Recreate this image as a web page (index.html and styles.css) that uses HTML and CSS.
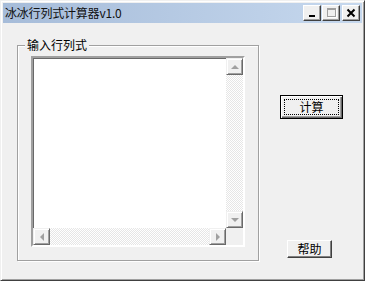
FILE: index.html
```
<!DOCTYPE html>
<html lang="zh-CN">
<head>
<meta charset="utf-8">
<link rel="stylesheet" href="styles.css">
</head>
<body>
<div class="window">
  <div class="titlebar">
    <span class="title">冰冰行列式计算器v1.0</span>
    <div class="caption-btns">
      <div class="cap-btn"><svg width="14" height="12" viewBox="0 0 14 12"><rect x="4" y="8" width="6" height="2" fill="#000"/></svg></div>
      <div class="cap-btn"><svg width="14" height="12" viewBox="0 0 14 12"><rect x="3.5" y="1.5" width="8" height="8" fill="none" stroke="#a0a0a0"/><path d="M4 2.5h7" stroke="#a0a0a0"/><path d="M12.5 2v8.5H4" stroke="#fff" fill="none"/></svg></div>
      <div class="cap-btn close"><svg width="14" height="12" viewBox="0 0 14 12"><path d="M3.5 2.5l7 7M10.5 2.5l-7 7" stroke="#000" stroke-width="2"/></svg></div>
    </div>
  </div>
  <div class="client">
    <fieldset class="group">
      <legend class="group-label">输入行列式</legend>
      <div class="editbox">
        <div class="edit-area"></div>
        <div class="vscroll">
          <div class="sbtn"><span class="arrow up"></span></div>
          <div class="track"></div>
          <div class="sbtn"><span class="arrow down"></span></div>
        </div>
        <div class="hscroll">
          <div class="sbtn"><span class="arrow left"></span></div>
          <div class="track"></div>
          <div class="sbtn"><span class="arrow right"></span></div>
        </div>
        <div class="corner"></div>
      </div>
    </fieldset>
    <div class="side">
      <button class="btn default"><span class="focus">计算</span></button>
      <button class="btn help">帮助</button>
    </div>
  </div>
</div>
</body>
</html>
```
FILE: styles.css
```
* { box-sizing: border-box; }
html, body { margin: 0; padding: 0; background: #f0f0f0; }
body { font-family: "Noto Sans CJK SC", "Noto Sans", sans-serif; font-size: 12px; color: #000; }

.window {
  width: 365px; height: 281px;
  background: #f0f0f0;
  border: 1px solid;
  border-color: #f0f0f0 #404040 #404040 #f0f0f0;
  box-shadow: inset 1px 1px 0 #fff, inset -1px -1px 0 #a0a0a0;
  padding: 2px;
  display: flex; flex-direction: column;
}

.titlebar {
  height: 20px;
  background: linear-gradient(to right, #a6bcd9, #c6d8ee);
  display: flex; align-items: center; justify-content: space-between;
  padding: 0 2px 0 2px;
}
.title { font-size: 12px; line-height: 14px; color: #111; letter-spacing: -0.2px; }
.caption-btns { display: flex; gap: 1px; }
.cap-btn {
  width: 18px; height: 16px;
  background: #f0f0f0;
  border: 1px solid; border-color: #fff #404040 #404040 #fff;
  box-shadow: inset -1px -1px 0 #a0a0a0;
  display: flex; align-items: center; justify-content: center;
}
.cap-btn.close { margin-left: 1px; }

.client { flex: 1; display: flex; padding: 15px 0 0 14px; }

.group {
  margin: 0; width: 242px; height: 223px;
  border: 1px solid #a0a0a0;
  box-shadow: 1px 1px 0 #fff, inset 1px 1px 0 #fff;
  padding: 4px 13px 13px 13px;
  display: flex;
}
.group-label {
  padding: 0 2px; margin-left: -6px;
  line-height: 14px; font-size: 12px;
  background: #f0f0f0;
}

.editbox {
  flex: 1;
  border: 2px solid; border-color: #a0a0a0 #fff #fff #a0a0a0;
  box-shadow: inset 1px 1px 0 #696969, inset -1px -1px 0 #e3e3e3;
  display: grid;
  grid-template-columns: 1fr 17px;
  grid-template-rows: 1fr 17px;
  background: #fff;
}
.edit-area { background: #fff; margin: 1px 0 0 1px; }
.vscroll { display: flex; flex-direction: column; }
.hscroll { display: flex; }
.track {
  flex: 1;
  background-color: #fff;
  background-image: repeating-conic-gradient(#e6e6e6 0 25%, #fff 0 50%);
  background-size: 2px 2px;
}
.corner { background: #f0f0f0; }
.sbtn {
  width: 17px; height: 17px; flex: none;
  background: #f0f0f0;
  border: 1px solid; border-color: #f0f0f0 #696969 #696969 #f0f0f0;
  box-shadow: inset 1px 1px 0 #fff, inset -1px -1px 0 #a0a0a0;
  display: flex; align-items: center; justify-content: center;
}
.arrow { width: 0; height: 0; border-style: solid; border-color: transparent; }
.arrow.up { border-width: 0 4px 4px 4px; border-bottom-color: #a0a0a0; }
.arrow.down { border-width: 4px 4px 0 4px; border-top-color: #a0a0a0; }
.arrow.left { border-width: 4px 4px 4px 0; border-right-color: #a0a0a0; }
.arrow.right { border-width: 4px 0 4px 4px; border-left-color: #a0a0a0; }

.side { display: flex; flex-direction: column; align-items: flex-start; padding: 57px 0 0 21px; }
.btn {
  font-family: "Noto Sans CJK SC", "Noto Sans", sans-serif; font-size: 12px; color: #000;
  background: #f0f0f0; padding: 0; margin: 0;
  display: flex; align-items: center; justify-content: center;
}
.btn.default {
  width: 63px; height: 24px;
  border: 1px solid #000;
  box-shadow: inset 1px 1px 0 #fff, inset -1px -1px 0 #696969, inset -2px -2px 0 #a0a0a0;
  padding: 3px;
}
.focus {
  width: 100%; height: 100%;
  border: 1px dotted #000;
  display: flex; align-items: center; justify-content: center;
  line-height: 14px;
}
.btn.help {
  width: 45px; height: 18px;
  margin: 121px 0 0 7px;
  border: 1px solid; border-color: #fff #404040 #404040 #fff;
  box-shadow: inset -1px -1px 0 #808080;
  line-height: 14px;
}
```
